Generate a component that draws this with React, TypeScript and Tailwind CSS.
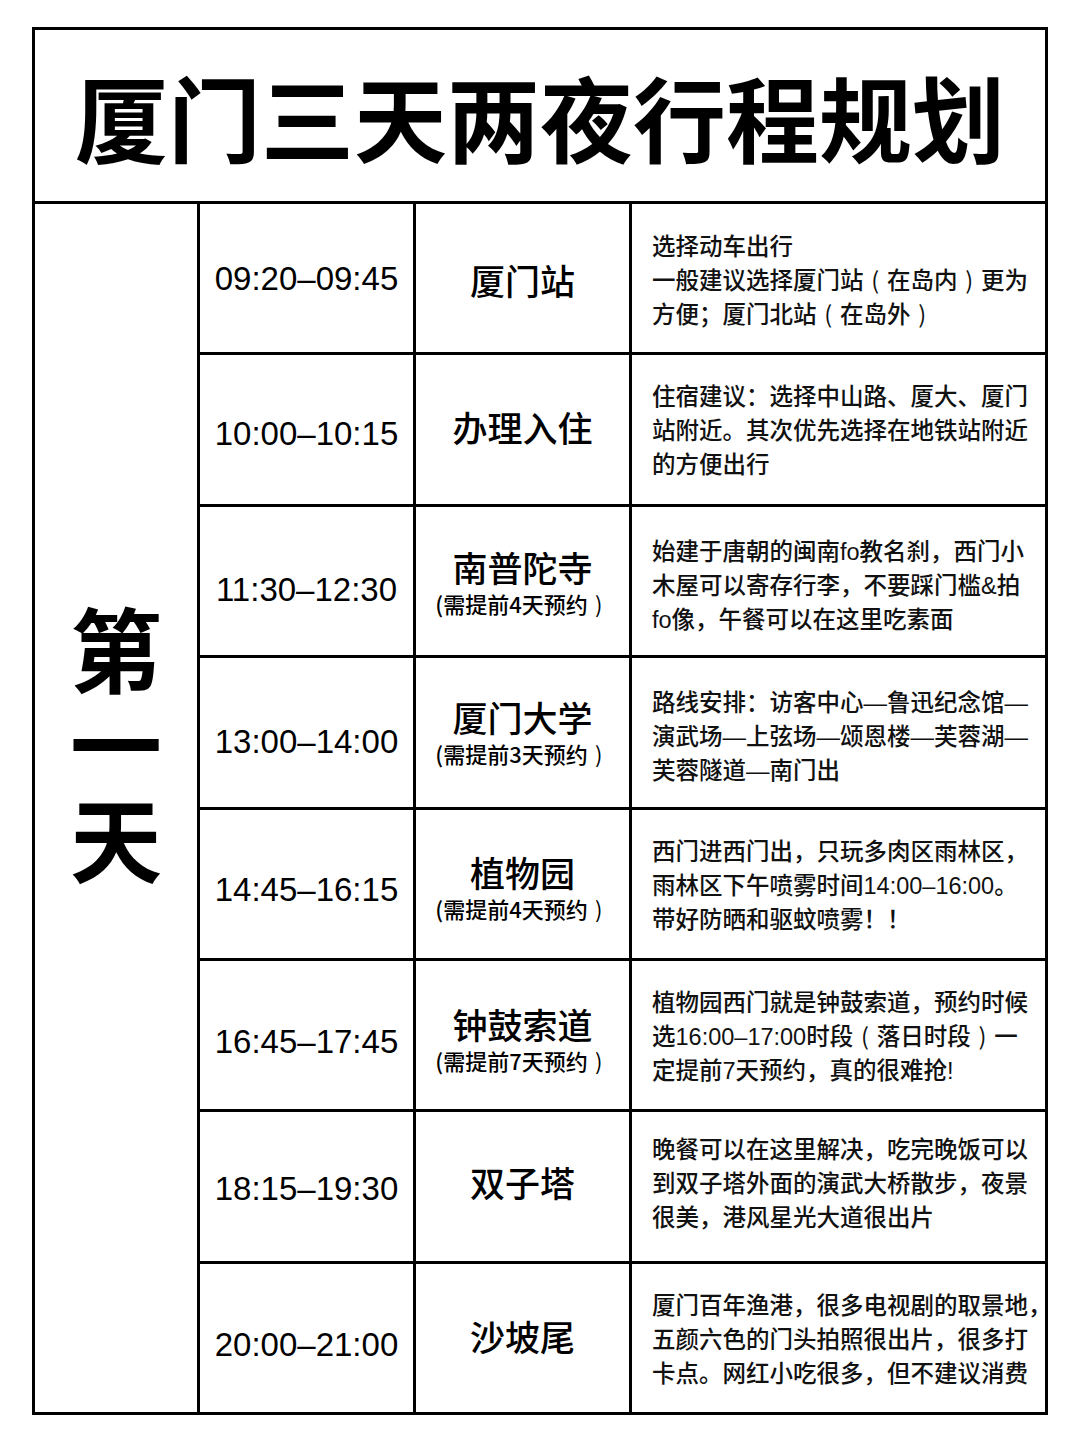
import React from "react";

const rows: { time: string; name: string; sub?: string; desc: string[] }[] = [
  {
    time: "09:20–09:45",
    name: "厦门站",
    desc: ["选择动车出行", "一般建议选择厦门站（在岛内）更为", "方便；厦门北站（在岛外）"],
  },
  {
    time: "10:00–10:15",
    name: "办理入住",
    desc: ["住宿建议：选择中山路、厦大、厦门", "站附近。其次优先选择在地铁站附近", "的方便出行"],
  },
  {
    time: "11:30–12:30",
    name: "南普陀寺",
    sub: "(需提前4天预约",
    desc: ["始建于唐朝的闽南fo教名刹，西门小", "木屋可以寄存行李，不要踩门槛&拍", "fo像，午餐可以在这里吃素面"],
  },
  {
    time: "13:00–14:00",
    name: "厦门大学",
    sub: "(需提前3天预约",
    desc: ["路线安排：访客中心—鲁迅纪念馆—", "演武场—上弦场—颂恩楼—芙蓉湖—", "芙蓉隧道—南门出"],
  },
  {
    time: "14:45–16:15",
    name: "植物园",
    sub: "(需提前4天预约",
    desc: ["西门进西门出，只玩多肉区雨林区，", "雨林区下午喷雾时间14:00–16:00。", "带好防晒和驱蚊喷雾！！"],
  },
  {
    time: "16:45–17:45",
    name: "钟鼓索道",
    sub: "(需提前7天预约",
    desc: ["植物园西门就是钟鼓索道，预约时候", "选16:00–17:00时段（落日时段）一", "定提前7天预约，真的很难抢!"],
  },
  {
    time: "18:15–19:30",
    name: "双子塔",
    desc: ["晚餐可以在这里解决，吃完晚饭可以", "到双子塔外面的演武大桥散步，夜景", "很美，港风星光大道很出片"],
  },
  {
    time: "20:00–21:00",
    name: "沙坡尾",
    desc: ["厦门百年渔港，很多电视剧的取景地，", "五颜六色的门头拍照很出片，很多打", "卡点。网红小吃很多，但不建议消费"],
  },
];

const timeOff = ["pt-[2px]", "pt-[8px]", "pt-[18px]", "pt-[18px]", "pt-[12px]", "pt-[14px]", "pt-[4px]", "pt-[14px]"];
const placeOff = ["pt-[4px]", "pb-[6px]", "pt-[4px]", "pt-[2px]", "pt-[8px]", "pt-[10px]", "pb-[8px]", "pb-[4px]"];
const descOff = ["pt-[6px]", "pt-[2px]", "pt-[10px]", "pt-[10px]", "pt-[4px]", "pt-[4px]", "pb-[4px]", "pt-[4px]"];

function Paren({ ch }: { ch: string }) {
  return (
    <span className="inline-block w-[1em] text-center leading-none font-['Noto_Sans_CJK_SC',sans-serif] font-normal">
      {ch}
    </span>
  );
}

function Line({ text }: { text: string }) {
  const parts = text.split(/([（）])/);
  return (
    <div className="h-[34px]">
      {parts.map((p, k) =>
        p === "（" ? (
          <Paren key={k} ch="(" />
        ) : p === "）" ? (
          <Paren key={k} ch=")" />
        ) : (
          <React.Fragment key={k}>{p}</React.Fragment>
        )
      )}
    </div>
  );
}

export default function App() {
  return (
    <div className="w-[1080px] h-[1443px] bg-white pt-[27px] pl-[32px] font-['Liberation_Sans','Noto_Sans_CJK_SC',sans-serif] text-black">
      <div className="w-[1016px] h-[1388px] border-[3px] border-black flex flex-col">
        <div className="h-[174px] shrink-0 border-b-[3px] border-black flex items-center justify-center">
          <h1 className="font-['Noto_Sans_CJK_SC',sans-serif] font-bold text-[93px] leading-none tracking-[0px]">
            厦门三天两夜行程规划
          </h1>
        </div>
        <div className="flex-1 flex min-h-0">
          <div className="w-[165px] shrink-0 border-r-[3px] border-black flex flex-col items-center justify-center pb-[136px] font-['Noto_Sans_CJK_SC',sans-serif] font-bold text-[92px] leading-[95px]">
            <span>第</span>
            <span>一</span>
            <span>天</span>
          </div>
          <div className="flex-1 min-w-0 flex flex-col">
            {rows.map((r, i) => (
              <div
                key={i}
                className={
                  "flex-1 flex " + (i < rows.length - 1 ? "border-b-[3px] border-black" : "")
                }
              >
                <div
                  className={
                    "w-[216px] shrink-0 border-r-[3px] border-black flex items-center justify-center text-[33px] font-['Liberation_Sans',sans-serif] " +
                    timeOff[i]
                  }
                >
                  {r.time}
                </div>
                <div
                  className={
                    "w-[216px] shrink-0 border-r-[3px] border-black flex flex-col items-center justify-center font-['Noto_Sans_CJK_SC',sans-serif] " +
                    placeOff[i]
                  }
                >
                  <div className="text-[35px] leading-[40px] font-medium">{r.name}</div>
                  {r.sub && (
                    <div className="text-[22px] leading-[32px] font-medium whitespace-nowrap">
                      {r.sub}
                      <Paren ch=")" />
                    </div>
                  )}
                </div>
                <div
                  className={
                    "flex-1 min-w-0 flex flex-col justify-center pl-[20px] text-[23.5px] leading-[34px] font-medium whitespace-nowrap text-[#111] " +
                    descOff[i]
                  }
                >
                  {r.desc.map((l, j) => (
                    <Line key={j} text={l} />
                  ))}
                </div>
              </div>
            ))}
          </div>
        </div>
      </div>
    </div>
  );
}
